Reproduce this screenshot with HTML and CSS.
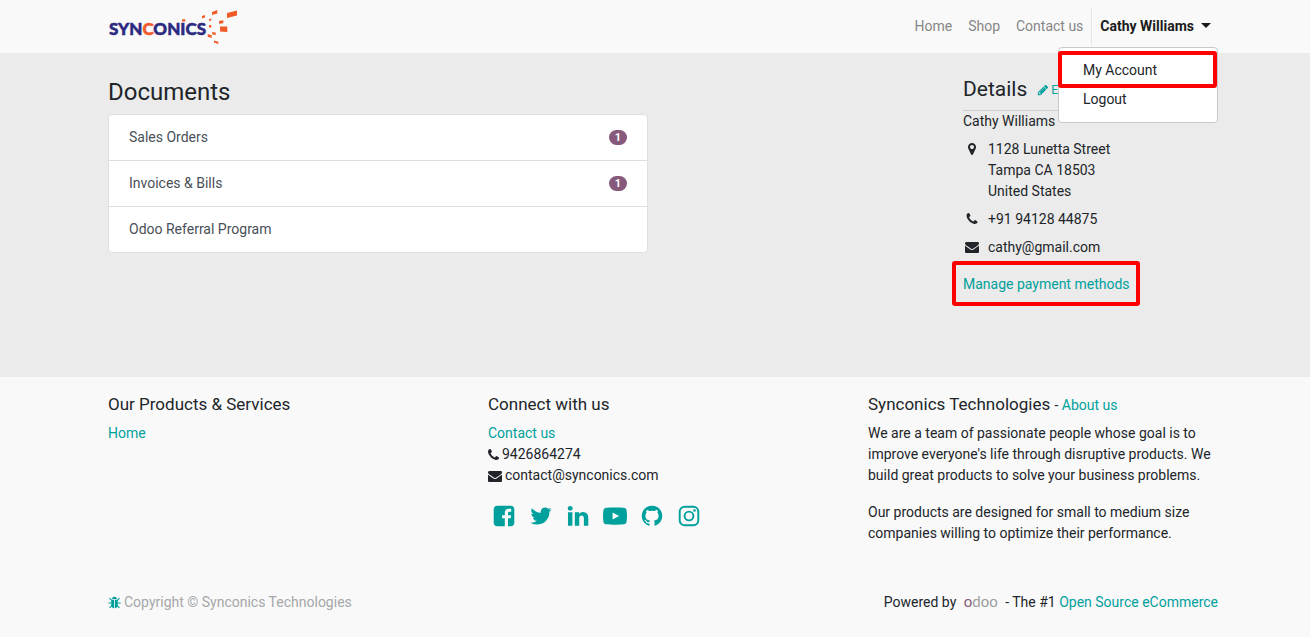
FILE: index.html
```html
<!DOCTYPE html>
<html lang="en">
<head>
<meta charset="utf-8">
<title>My Account | Synconics Technologies</title>
<link rel="stylesheet" href="styles.css">
</head>
<body>
<svg class="sprite" aria-hidden="true">
  <symbol id="phone" viewBox="0 0 1792 1792"><path d="M1600 1240q0 27-10 70.5t-21 68.5q-21 50-122 106-94 51-186 51-27 0-53-3.5t-57.5-12.5-47-14.5-55.5-20.5-49-18q-98-35-175-83-127-79-264-216t-216-264q-48-77-83-175-3-9-18-49t-20.5-55.5-14.5-47-12.5-57.5-3.5-53q0-92 51-186 56-101 106-122 25-11 68.5-21t70.5-10q14 0 21 3 18 6 53 76 11 19 30 54t35 63.5 31 53.5q3 4 17.5 25t21.5 35.5 7 28.5q0 20-28.5 50t-62 55-62 53-28.5 46q0 9 5 22.5t8.5 20.5 14 24 11.5 19q76 137 174 235t235 174q2 1 19 11.5t24 14 20.5 8.5 22.5 5q18 0 46-28.5t53-62 55-62 50-28.5q14 0 28.5 7t35.5 21.5 25 17.5q25 15 53.5 31t63.5 35 54 30q70 35 76 53 3 7 3 21z"/></symbol>
  <symbol id="envelope" viewBox="0 0 1792 1792"><path d="M1792 710v794q0 66-47 113t-113 47h-1472q-66 0-113-47t-47-113v-794q44 49 101 87 362 246 497 345 57 42 92.5 65.5t94.5 48 110 24.5h2q51 0 110-24.5t94.5-48 92.5-65.5q170-123 498-345 57-39 100-87zm0-294q0 79-49 151t-122 123q-376 261-468 325-10 7-42.5 31t-54 38.5-52 32.5-57.5 27-50 9h-2q-23 0-50-9t-57.5-27-52-32.5-54-38.5-42.5-31q-91-64-262-182.5t-205-142.5q-62-42-117-115.5t-55-136.5q0-78 41.5-130t118.5-52h1472q65 0 112.5 47t47.5 113z"/></symbol>
</svg>

<header class="site-header">
  <div class="container header-bar">
    <a class="brand" href="#" aria-label="Synconics">
      <svg width="132" height="40" viewBox="0 0 132 40">
        <text class="brand-text" x="1" y="28">SYN<tspan class="brand-accent">C</tspan>ONICS</text>
        <g fill="#f15a29">
          <path d="M74 12.300h3.300v2.200H74zM94 9l3-1v2.500l-3 1zM104 5l5.300-2v3.500L104 8zM119 6l10-2.500v5L119 11zM101 12l2.300-.5v1.800l-2.300.7zM111 14l4.300-.8v3l-4.300.6zM101 18h2.300v2.500H101zM112 19.500h7.300V25l-7.300-.5zM104.300 25l3.400.6v2.400l-3.400-.6zM99.700 27l4 1.200v2.800l-4-1.200zM106 33.500l4.300 1.200V37l-4.300-1.500z"/>
        </g>
      </svg>
    </a>
    <nav class="nav">
      <a class="nav-link" href="#">Home</a>
      <a class="nav-link" href="#">Shop</a>
      <a class="nav-link" href="#">Contact us</a>
      <div class="user">
        <button class="user-toggle" type="button" aria-expanded="true">Cathy Williams</button>
        <div class="menu">
          <a class="menu-item marked" href="#">My Account</a>
          <a class="menu-item" href="#">Logout</a>
        </div>
      </div>
    </nav>
  </div>
</header>

<main class="main">
  <div class="container main-grid">
    <section class="documents">
      <h1 class="title">Documents</h1>
      <div class="list">
        <a class="list-item" href="#">Sales Orders <span class="badge">1</span></a>
        <a class="list-item" href="#">Invoices &amp; Bills <span class="badge">1</span></a>
        <a class="list-item" href="#">Odoo Referral Program</a>
      </div>
    </section>
    <section class="details">
      <div class="details-head">
        <h2 class="subtitle">Details</h2>
        <a class="edit" href="#"><svg class="icon-small" viewBox="0 0 1792 1792"><path d="M491 1536l91-91-235-235-91 91v107h128v128h107zm523-928q0-22-22-22-10 0-17 7l-542 542q-7 7-7 17 0 22 22 22 10 0 17-7l542-542q7-7 7-17zm-54-192l416 416-832 832h-416v-416zm683 96q0 53-37 90l-166 166-416-416 166-165q36-38 90-38 53 0 91 38l235 234q37 39 37 91z"/></svg>Edit</a>
      </div>
      <div>Cathy Williams</div>
      <address class="contact">
        <div class="contact-row">
          <svg class="icon" viewBox="0 0 1792 1792"><path d="M1152 640q0-106-75-181t-181-75-181 75-75 181 75 181 181 75 181-75 75-181zm256 0q0 109-33 179l-364 774q-16 33-47.500 52t-67.500 19-67.500-19-46.500-52l-365-774q-33-70-33-179 0-212 150-362t362-150 362 150 150 362z"/></svg>
          <div>1128 Lunetta Street<br>Tampa CA 18503<br>United States</div>
        </div>
        <div class="contact-row"><svg class="icon"><use href="#phone"/></svg><span>+91 94128 44875</span></div>
        <div class="contact-row"><svg class="icon"><use href="#envelope"/></svg><span>cathy@gmail.com</span></div>
      </address>
      <a class="manage" href="#">Manage payment methods</a>
    </section>
  </div>
</main>

<footer class="footer">
  <div class="container footer-grid">
    <section>
      <h3 class="foot-title">Our Products &amp; Services</h3>
      <a href="#">Home</a>
    </section>
    <section>
      <h3 class="foot-title">Connect with us</h3>
      <div><a href="#">Contact us</a></div>
      <div class="foot-row"><svg class="icon-phone" viewBox="192 0 1408 1792"><use href="#phone" width="1792" height="1792"/></svg>9426864274</div>
      <div class="foot-row"><svg class="icon"><use href="#envelope"/></svg>contact@synconics.com</div>
      <div class="social">
        <a href="#" aria-label="Facebook"><svg viewBox="0 0 24 24"><path fill-rule="evenodd" d="M5.500 1.700h13a3.800 3.800 0 0 1 3.800 3.800v13a3.800 3.800 0 0 1-3.800 3.800h-2.500v-8h2.700l.4-3.100h-3.100v-2c0-.9.3-1.500 1.600-1.500h1.600V4.900c-.3 0-1.300-.1-2.400-.1-2.400 0-4 1.400-4 4.100v2.300h-2.700v3.100h2.700v8H5.500a3.800 3.800 0 0 1-3.800-3.800v-13a3.800 3.800 0 0 1 3.800-3.800z"/></svg></a>
        <a href="#" aria-label="Twitter"><svg viewBox="0 0 1792 1792"><path d="M1684 408q-67 98-162 167 1 14 1 42 0 130-38 259.500t-115.500 248.500-184.500 210.500-258 146-323 54.500q-271 0-496-145 35 4 78 4 225 0 401-138-105-2-188-64.500t-114-159.500q33 5 61 5 43 0 85-11-112-23-185.500-111.500t-73.500-205.500v-4q68 38 146 41-66-44-105-115t-39-154q0-88 44-163 121 149 294.500 238.500t371.500 99.500q-8-38-8-74 0-134 94.500-228.500t228.500-94.500q140 0 236 102 109-21 205-78-37 115-142 178 93-10 186-50z"/></svg></a>
        <a href="#" aria-label="LinkedIn"><svg viewBox="0 0 1792 1792"><path d="M477 625v991h-330v-991h330zm21-306q1 73-50.500 122t-135.500 49h-2q-82 0-132-49t-50-122q0-74 51.500-122.500t134.500-48.500 133 48.500 51 122.500zm1166 729v568h-329v-530q0-105-40.500-164.500t-126.500-59.500q-63 0-105.500 34.500t-63.500 85.500q-11 30-11 81v553h-329q2-399 2-647t-1-296l-1-48h329v144h-2q20-32 41-56t56.500-52 87-43.500 114.500-15.500q171 0 275 113.500t104 332.500z"/></svg></a>
        <a href="#" aria-label="YouTube"><svg viewBox="0 0 24 24"><path fill-rule="evenodd" d="M12 3.400c4 0 7 .1 9 .4 1.500.2 2.400 1.300 2.600 2.800.5 3.600.5 7.200 0 10.800-.2 1.500-1.100 2.600-2.600 2.800-5 .6-13 .6-18 0C1.500 20 .6 18.900.4 17.400c-.5-3.600-.5-7.200 0-10.800C.6 5.100 1.500 4 3 3.800c2-.3 5-.4 9-.4zM9.600 8.400v7.200l6.500-3.600z"/></svg></a>
        <a href="#" aria-label="GitHub"><svg viewBox="0 0 1792 1792"><path d="M896 128q209 0 385.500 103t279.500 279.500 103 385.500q0 251-146.500 451.500t-378.500 277.500q-27 5-40-7t-13-30q0-3 .5-76.500t.5-134.500q0-97-52-142 57-6 102.500-18t94-39 81-66.500 53-105 20.500-150.500q0-119-79-206 37-91-8-204-28-9-81 11t-92 44l-38 24q-93-26-192-26t-192 26q-16-11-42.500-27t-83.500-38.500-85-13.500q-45 113-8 204-79 87-79 206 0 85 20.500 150t52.500 105 80.500 67 94 39 102.500 18q-39 36-49 103-21 10-45 15t-57 5-65.500-21.500-55.500-62.500q-19-32-48.500-52t-49.500-24l-20-3q-21 0-29 4.500t-5 11.500 9 14 13 12l7 5q22 10 43.500 38t31.500 51l10 23q13 38 44 61.500t67 30 69.500 7 55.500-3.500l23-4q0 38 .5 88.500t.5 54.500q0 18-13 30t-40 7q-232-77-378.500-277.500t-146.500-451.500q0-209 103-385.500t279.500-279.500 385.500-103z"/></svg></a>
        <a href="#" aria-label="Instagram"><svg viewBox="0 0 24 24"><g fill="none" stroke="currentColor" stroke-width="1.900"><rect x="2.700" y="2.700" width="18.600" height="18.600" rx="5"/><circle cx="12" cy="12" r="4.400"/></g><circle cx="17.500" cy="6.500" r="1.300"/></svg></a>
      </div>
    </section>
    <section>
      <h3 class="foot-title">Synconics Technologies <small class="about">- <a href="#">About us</a></small></h3>
      <p class="text">We are a team of passionate people whose goal is to improve everyone's life through disruptive products. We build great products to solve your business problems.</p>
      <p class="text">Our products are designed for small to medium size companies willing to optimize their performance.</p>
    </section>
  </div>
  <div class="container legal">
    <div class="copyright"><a class="bug" href="#" aria-label="Debug"><svg viewBox="0 0 13 13"><path d="M4 3.300a2.500 2.500 0 0 1 5 0zM3.200 4h2.900v8.300C4.300 12.100 3.200 10.500 3.200 8.500zM6.900 4h2.900v4.500c0 2-1.100 3.600-2.900 3.800z"/><path fill="none" stroke="currentColor" stroke-width="1.100" d="M1.500 2.200l2.200 2.200M11.500 2.200L9.300 4.400M.3 7h3M9.700 7h3M1.600 11.900L4 9.500M11.400 11.900L9 9.500"/></svg></a>Copyright © Synconics Technologies</div>
    <div class="powered">Powered by <a class="odoo" href="#"><span class="odoo-first">o</span>doo</a> - The #1 <a href="#">Open Source eCommerce</a></div>
  </div>
</footer>
</body>
</html>
```

FILE: styles.css
```css
* { box-sizing: border-box; }

body {
  margin: 0;
  min-height: 100vh;
  display: flex;
  flex-direction: column;
  background: #f9f9f9;
  color: #212529;
  font: 14px/21px Roboto, "Liberation Sans", sans-serif;
}

a { color: #00a09d; text-decoration: none; }
h1, h2, h3, p { margin: 0; font-weight: 400; }
svg { display: block; fill: currentColor; flex: none; }

.sprite { position: absolute; width: 0; height: 0; }
.icon { width: 14px; height: 14px; }
.icon-phone { width: 11px; height: 14px; }
.icon-small { width: 12px; height: 12px; }

.container {
  width: 100%;
  max-width: 1326px;
  margin: 0 auto;
  padding: 0 92px 0 108px;
}

/* Header */
.header-bar {
  display: flex;
  align-items: center;
  justify-content: space-between;
  min-height: 53px;
}
.brand-text {
  font: 900 17px Lato, sans-serif;
  fill: #2b2a80;
  stroke: #2b2a80;
  stroke-width: 0.5px;
}
.brand-accent { fill: #f15a29; stroke: #f15a29; }
.nav { display: flex; align-items: center; }
.nav-link { padding: 8px; color: #868686; }
.user { position: relative; border-left: 1px solid #e6e6e6; }
.user-toggle {
  display: flex;
  align-items: center;
  gap: 7px;
  padding: 8px 7px 8px 8px;
  border: 0;
  background: none;
  color: #1b1b1b;
  font: inherit;
  font-weight: 700;
}
.user-toggle::after {
  content: "";
  margin-bottom: 2px;
  border: 5px solid transparent;
  border-top-color: currentColor;
  border-bottom: 0;
}
.menu {
  position: absolute;
  top: 100%;
  right: 0;
  z-index: 2;
  width: 160px;
  margin-top: 2px;
  padding: 8px 0;
  border: 1px solid #c9c9c9;
  border-radius: 4px;
  background: #fff;
}
.menu-item { display: block; padding: 4px 24px; color: #212529; }

/* Highlight frames */
.marked, .manage { position: relative; }
.marked::after, .manage::after {
  content: "";
  position: absolute;
  border: 4px solid #f00;
  border-radius: 3px;
  pointer-events: none;
}
.marked::after { inset: -5px 0 -3px -1px; }
.manage::after { inset: -13px -10px -11px -11px; }

/* Account */
.main { min-height: 324px; background: #ebebeb; }
.main-grid {
  display: grid;
  grid-template-columns: repeat(12, 1fr);
  column-gap: 30px;
}
.documents { grid-column: 1 / 7; padding-top: 24px; }
.details { grid-column: 10 / 13; padding-top: 20px; }
.title { margin-bottom: 7px; font-size: 24px; line-height: 30px; }
.list {
  overflow: hidden;
  border: 1px solid #dee0e2;
  border-radius: 4px;
  background: #fff;
}
.list-item {
  display: flex;
  align-items: center;
  justify-content: space-between;
  padding: 12px 20px;
  color: #495057;
}
.list-item + .list-item { border-top: 1px solid #dcdddf; }
.badge {
  padding: 2px 6px;
  border-radius: 8px;
  background: #875a7b;
  color: #fff;
  font-size: 11px;
  font-weight: 700;
  line-height: 11px;
}
.details-head {
  display: flex;
  align-items: baseline;
  gap: 10px;
  padding: 3px 0 8px;
  border-bottom: 1px solid #cfcfcf;
}
.subtitle { font-size: 21px; line-height: 26px; }
.edit { display: flex; align-items: center; gap: 2px; font-size: 12px; }
.contact {
  display: grid;
  gap: 7px;
  margin: 7px 0 16px;
  font-style: normal;
}
.contact-row { display: flex; gap: 9px; padding-left: 2px; }
.contact-row .icon { margin-top: 3px; }
.manage { display: inline-block; }

/* Footer */
.footer { flex: 1; display: flex; flex-direction: column; padding: 16px 0 24px; }
.footer-grid {
  display: grid;
  grid-template-columns: repeat(3, 1fr);
  column-gap: 30px;
}
.foot-title { margin-bottom: 8px; font-size: 17px; line-height: 22px; }
.about { font-size: 14px; line-height: 14px; }
.foot-row { display: flex; align-items: center; gap: 3px; }
.social { display: flex; gap: 13px; padding: 18px 4px; }
.social svg { width: 24px; height: 24px; }
.text { margin-bottom: 16px; }
.legal { display: flex; justify-content: space-between; margin-top: auto; }
.copyright { display: flex; align-items: center; gap: 3px; color: #a5a7a9; }
.bug svg { width: 13px; height: 13px; }
.odoo {
  margin: 0 4px;
  color: #9c9c9c;
  font: 15px/20px Lato, sans-serif;
}
.odoo-first { color: #875a7b; }
```
